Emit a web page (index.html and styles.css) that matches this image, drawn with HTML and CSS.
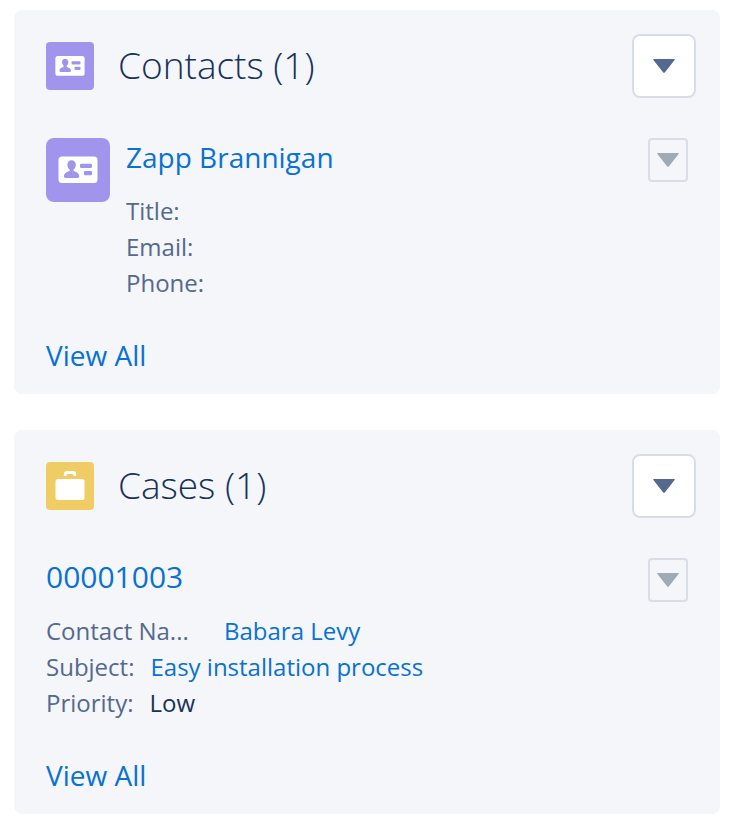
FILE: index.html
```html
<!DOCTYPE html>
<html lang="en">
<head>
<meta charset="utf-8">
<meta name="viewport" content="width=device-width, initial-scale=1">
<title>Related Lists</title>
<link rel="stylesheet" href="styles.css">
</head>
<body>
<svg class="sprite" aria-hidden="true">
  <symbol id="contact" viewBox="0 0 64 64">
    <path fill="#fff" fill-rule="evenodd" d="M16 18.500h32a3.500 3.500 0 0 1 3.500 3.500v19.500a3.500 3.500 0 0 1-3.500 3.500h-32a3.500 3.500 0 0 1-3.500-3.500v-19.500a3.500 3.500 0 0 1 3.500-3.500zM25.500 22.200c-2.500 0-4.100 2-4.100 4.500 0 1.900.8 3.500 1.900 4.500.7.700.5 1.700-.4 2.100-2.600 1.100-4.900 2.200-4.900 4.500v.4c0 1.200.9 1.900 2 1.900h11.200c1.100 0 2-.7 2-1.900v-.4c0-2.300-2.300-3.400-4.900-4.500-.9-.4-1.100-1.400-.4-2.100 1.100-1 1.900-2.600 1.900-4.500 0-2.500-1.800-4.500-4.300-4.500zM35.300 25.700a1.300 1.300 0 0 0-1.300 1.300v1.800a1.300 1.300 0 0 0 1.300 1.300h9.400a1.300 1.300 0 0 0 1.300-1.300v-1.800a1.300 1.300 0 0 0-1.300-1.300zM39.300 33a1.300 1.300 0 0 0-1.300 1.300v1.700a1.300 1.300 0 0 0 1.300 1.300h5.400a1.300 1.300 0 0 0 1.300-1.300v-1.700a1.300 1.300 0 0 0-1.300-1.300z"/>
  </symbol>
  <symbol id="case" viewBox="0 0 48 48">
    <path d="M19.200 14v-1.500a2 2 0 0 1 2-2h5.600a2 2 0 0 1 2 2v1.500" fill="none" stroke="#fff" stroke-width="2.800"/>
    <rect x="9.500" y="17" width="29" height="21" rx="2.500" fill="#fff"/>
  </symbol>
  <symbol id="down" viewBox="0 0 22 14">
    <path d="M.8 0h20.400q1.200 0 .4 1l-9.800 12.400q-.8.900-1.600 0L.4 1q-.8-1 .4-1z" fill="currentColor"/>
  </symbol>
</svg>

<main class="page">
  <section class="card">
    <header class="card-header">
      <svg class="icon icon-contact" aria-hidden="true"><use href="#contact"/></svg>
      <h2 class="card-title">Contacts (1)</h2>
      <button class="menu" type="button" aria-label="Contacts actions"><svg class="arrow"><use href="#down"/></svg></button>
    </header>
    <div class="item">
      <svg class="icon icon-large icon-contact" aria-hidden="true"><use href="#contact"/></svg>
      <div class="item-body">
        <a class="link" href="#">Zapp Brannigan</a>
        <dl class="details">
          <div class="row"><dt>Title:</dt><dd></dd></div>
          <div class="row"><dt>Email:</dt><dd></dd></div>
          <div class="row"><dt>Phone:</dt><dd></dd></div>
        </dl>
      </div>
      <button class="menu menu-small" type="button" aria-label="Zapp Brannigan actions"><svg class="arrow"><use href="#down"/></svg></button>
    </div>
    <footer class="card-footer"><a class="link" href="#">View All</a></footer>
  </section>

  <section class="card">
    <header class="card-header">
      <svg class="icon icon-case" aria-hidden="true"><use href="#case"/></svg>
      <h2 class="card-title">Cases (1)</h2>
      <button class="menu" type="button" aria-label="Cases actions"><svg class="arrow"><use href="#down"/></svg></button>
    </header>
    <div class="item">
      <div class="item-body">
        <a class="link link-number" href="#">00001003</a>
        <dl class="details">
          <div class="row"><dt class="label-wide">Contact Na...</dt><dd><a href="#">Babara Levy</a></dd></div>
          <div class="row"><dt>Subject:</dt><dd><a href="#">Easy installation process</a></dd></div>
          <div class="row"><dt>Priority:</dt><dd>Low</dd></div>
        </dl>
      </div>
      <button class="menu menu-small" type="button" aria-label="Case 00001003 actions"><svg class="arrow"><use href="#down"/></svg></button>
    </div>
    <footer class="card-footer"><a class="link" href="#">View All</a></footer>
  </section>
</main>
</body>
</html>
```
FILE: styles.css
```css
* {
  box-sizing: border-box;
}

body {
  margin: 0;
  background: #fff;
  color: #16325c;
  font-family: "Open Sans", "Noto Sans", sans-serif;
  font-size: 24px;
  font-weight: 440;
  line-height: 36px;
}

a {
  color: #0971d4;
  text-decoration: none;
}

.sprite {
  display: none;
}

.page {
  display: flex;
  flex-direction: column;
  gap: 36px;
  padding: 10px 14px 12px;
}

.card {
  padding: 24px 24px 20px 32px;
  border-radius: 8px;
  background: #f4f6fa;
}

.card-header {
  display: flex;
  align-items: center;
  margin-bottom: 40px;
}

.card-title {
  flex: 1;
  margin: 0 0 0 24px;
  padding-bottom: 2px;
  font-size: 37px;
  font-weight: 300;
  line-height: 48px;
}

.icon {
  flex: none;
  width: 48px;
  height: 48px;
  border-radius: 4px;
}

.icon-large {
  width: 64px;
  height: 64px;
  margin-right: 16px;
  border-radius: 8px;
}

.icon-contact {
  background: #a094ed;
}

.icon-case {
  background: #f0cd64;
}

.menu {
  display: flex;
  flex: none;
  align-items: center;
  justify-content: center;
  width: 64px;
  height: 64px;
  padding: 0;
  border: 2px solid #d8dde6;
  border-radius: 8px;
  background: #fff;
  color: #54698d;
}

.menu-small {
  width: 40px;
  height: 44px;
  margin-right: 8px;
  border-radius: 4px;
  background: #f4f6f9;
  color: #9faab5;
}

.arrow {
  width: 22px;
  height: 14px;
}

.item {
  display: flex;
  align-items: flex-start;
}

.item-body {
  flex: 1;
  min-width: 0;
}

.link {
  display: block;
  font-size: 28px;
  line-height: 38px;
}

.link-number {
  font-size: 30px;
}

.details {
  margin: 17px 0 0;
}

.row {
  display: flex;
  gap: 16px;
}

dt {
  color: #54698d;
}

.label-wide {
  min-width: 162px;
}

dd {
  margin: 0;
}

.card-footer {
  display: flex;
  margin-top: 35px;
}
```
